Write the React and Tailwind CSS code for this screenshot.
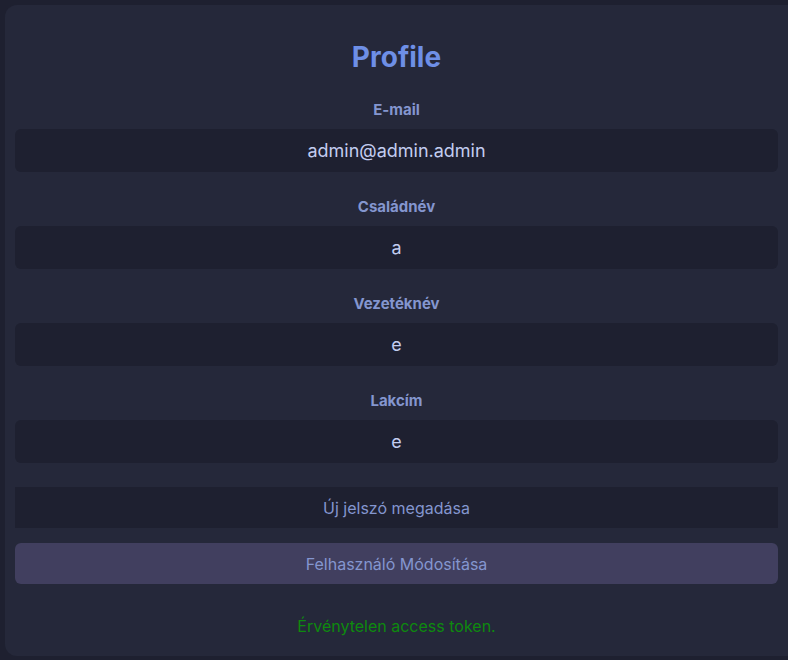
export default function App() {
  const fields = [
    { label: 'E-mail', value: 'admin@admin.admin' },
    { label: 'Családnév', value: 'a' },
    { label: 'Vezetéknév', value: 'e' },
    { label: 'Lakcím', value: 'e' },
  ]

  return (
    <div className="h-screen w-screen overflow-hidden bg-[#1e2030] pl-[5px] pt-[5px] font-['Inter',sans-serif]">
      <div className="h-[651px] w-[800px] rounded-l-xl bg-[#25283a] pl-[10px] pr-[22px] pt-[34px]">
        <div className="w-[763px] flex flex-col">
          <h1 className="text-center text-[28px] font-bold leading-[36px] text-[#6e8fe6]">Profile</h1>

          {fields.map((f) => (
            <div key={f.label} className="mt-[25px]">
              <label className="block text-center text-[15px] font-bold leading-[20px] text-[#8496cf]">
                {f.label}
              </label>
              <div className="mt-[9px] flex h-[43px] items-center justify-center rounded-md bg-[#1e2030] text-[18px] text-[#c3cdf0]">
                {f.value}
              </div>
            </div>
          ))}

          <div className="mt-[24px] flex h-[41px] items-center justify-center bg-[#1e2030] text-[16px] text-[#8496cf]">
            Új jelszó megadása
          </div>

          <button className="mt-[15px] flex h-[41px] items-center justify-center rounded-md bg-[#413f5f] text-[16px] text-[#8496cf]">
            Felhasználó Módosítása
          </button>

          <p className="mt-[32px] text-center text-[16px] leading-[20px] text-[#0e8a0e]">
            Érvénytelen access token.
          </p>
        </div>
      </div>
    </div>
  )
}
